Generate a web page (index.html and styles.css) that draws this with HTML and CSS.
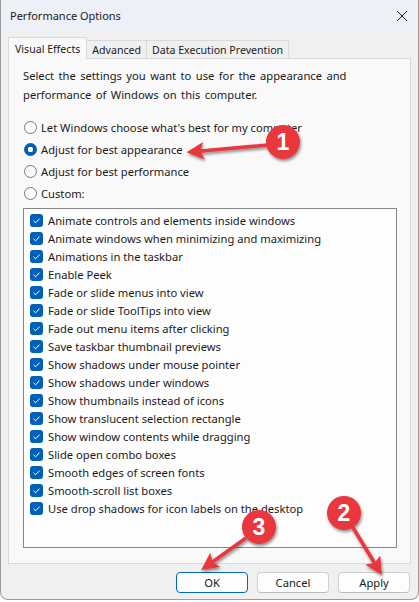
FILE: index.html
```html
<!DOCTYPE html>
<html>
<head>
<meta charset="utf-8">
<link rel="stylesheet" href="styles.css">
</head>
<body>
<div class="window">
  <div class="titlebar">
    <span class="title">Performance Options</span>
    <svg class="close" width="12" height="12" viewBox="0 0 12 12"><path d="M1 1L11 11M11 1L1 11" stroke="#1a1a1a" stroke-width="1"/></svg>
  </div>
  <div class="body">
    <div class="tabs">
      <div class="tab active">Visual Effects</div>
      <div class="tab">Advanced</div>
      <div class="tab">Data Execution Prevention</div>
    </div>
    <div class="panel">
      <p class="desc">Select the settings you want to use for the appearance and performance of Windows on this computer.</p>
      <div class="radios">
        <label class="radio"><span class="rb"></span>Let Windows choose what's best for my computer</label>
        <label class="radio"><span class="rb on"></span>Adjust for best appearance</label>
        <label class="radio"><span class="rb"></span>Adjust for best performance</label>
        <label class="radio"><span class="rb"></span>Custom:</label>
      </div>
      <div class="listbox">
        <div class="item"><span class="cb"></span>Animate controls and elements inside windows</div>
        <div class="item"><span class="cb"></span>Animate windows when minimizing and maximizing</div>
        <div class="item"><span class="cb"></span>Animations in the taskbar</div>
        <div class="item"><span class="cb"></span>Enable Peek</div>
        <div class="item"><span class="cb"></span>Fade or slide menus into view</div>
        <div class="item"><span class="cb"></span>Fade or slide ToolTips into view</div>
        <div class="item"><span class="cb"></span>Fade out menu items after clicking</div>
        <div class="item"><span class="cb"></span>Save taskbar thumbnail previews</div>
        <div class="item"><span class="cb"></span>Show shadows under mouse pointer</div>
        <div class="item"><span class="cb"></span>Show shadows under windows</div>
        <div class="item"><span class="cb"></span>Show thumbnails instead of icons</div>
        <div class="item"><span class="cb"></span>Show translucent selection rectangle</div>
        <div class="item"><span class="cb"></span>Show window contents while dragging</div>
        <div class="item"><span class="cb"></span>Slide open combo boxes</div>
        <div class="item"><span class="cb"></span>Smooth edges of screen fonts</div>
        <div class="item"><span class="cb"></span>Smooth-scroll list boxes</div>
        <div class="item"><span class="cb"></span>Use drop shadows for icon labels on the desktop</div>
      </div>
    </div>
    <div class="buttons">
      <button class="btn default">OK</button>
      <button class="btn">Cancel</button>
      <button class="btn">Apply</button>
    </div>
  </div>
  <svg class="annot" width="419" height="602" viewBox="0 0 419 602">
    <defs>
      <filter id="sh" x="-50%" y="-50%" width="200%" height="200%">
        <feDropShadow dx="1" dy="2" stdDeviation="1.5" flood-color="#000" flood-opacity="0.45"/>
      </filter>
      <marker id="ah" viewBox="0 0 10 10" refX="8" refY="5" markerWidth="5" markerHeight="5" orient="auto">
        <path d="M0 0L10 5L0 10L2 5Z" fill="#e8373d"/>
      </marker>
    </defs>
    <g filter="url(#sh)">
      <line x1="268" y1="145" x2="190" y2="152" stroke="#e8373d" stroke-width="3.5" marker-end="url(#ah)"/>
      <circle cx="283" cy="142" r="17" fill="#e8373d"/>
      <line x1="352" y1="526" x2="380" y2="572" stroke="#e8373d" stroke-width="3.5" marker-end="url(#ah)"/>
      <circle cx="344" cy="513" r="17" fill="#e8373d"/>
      <line x1="246" y1="538" x2="204" y2="568" stroke="#e8373d" stroke-width="3.5" marker-end="url(#ah)"/>
      <circle cx="259" cy="527" r="17" fill="#e8373d"/>
    </g>
    <text x="283" y="150" class="num">1</text>
    <text x="344" y="521" class="num">2</text>
    <text x="259" y="535" class="num">3</text>
  </svg>
</div>
</body>
</html>
```

FILE: styles.css
```css
* { box-sizing: border-box; }
html, body { margin: 0; padding: 0; }
body {
  width: 419px;
  height: 602px;
  background: #ffffff;
  font-family: "Noto Sans", "Segoe UI", sans-serif;
  font-size: 11.2px;
  color: #1a1a1a;
  overflow: hidden;
}
.window {
  position: relative;
  width: 419px;
  height: 600px;
  border: 1px solid #9b9b9b;
  border-top: none;
  border-radius: 0 0 8px 8px;
  background: #f0f0f0;
  display: flex;
  flex-direction: column;
}
.titlebar {
  height: 31px;
  background: #eef0f7;
  display: flex;
  align-items: center;
  justify-content: space-between;
  padding: 0 8px 0 9px;
}
.title { font-size: 11px; color: #1a1a1a; }
.close { margin-right: 2px; }
.body {
  flex: 1;
  display: flex;
  flex-direction: column;
  padding: 6px 7px 0 7px;
}
.tabs {
  display: flex;
  align-items: flex-end;
  height: 21px;
  position: relative;
  z-index: 1;
  font-size: 10.6px;
}
.tab {
  height: 18px;
  padding: 0 5px;
  border: 1px solid #d9d9d9;
  border-bottom: none;
  background: #f0f0f0;
  display: flex;
  align-items: center;
  margin-left: -1px;
}
.tab:first-child { margin-left: 0; }
.tab.active {
  height: 22px;
  margin-bottom: -1px;
  background: #f9f9f9;
  padding: 0 6px;
}
.panel {
  height: 506px;
  background: #f9f9f9;
  border: 1px solid #d9d9d9;
  padding: 7px 13px 0 14px;
  display: flex;
  flex-direction: column;
}
.desc {
  margin: 0;
  line-height: 19px;
  width: 380px;
  word-spacing: 1.5px;
}
.radios {
  margin-top: 12px;
  display: flex;
  flex-direction: column;
}
.radio {
  height: 22px;
  display: flex;
  align-items: center;
  gap: 4px;
  padding-left: 1px;
}
.rb {
  width: 13px;
  height: 13px;
  border: 1px solid #7a7a7a;
  border-radius: 50%;
  background: #fbfbfb;
  flex: none;
}
.rb.on {
  border: none;
  background: radial-gradient(circle, #ffffff 0 2.5px, #005fb8 3px);
}
.listbox {
  margin-top: 4px;
  width: 374px;
  height: 340px;
  border: 1px solid #878787;
  background: #fdfdfd;
  padding: 2px 0 0 6px;
}
.item {
  height: 18px;
  display: flex;
  align-items: center;
  gap: 5px;
}
.cb {
  width: 13px;
  height: 13px;
  border-radius: 3px;
  background: #005fb8 url("data:image/svg+xml,%3Csvg xmlns='http://www.w3.org/2000/svg' width='13' height='13'%3E%3Cpath d='M3.5 6.8L5.6 8.8L9.6 4.6' fill='none' stroke='white' stroke-width='1'/%3E%3C/svg%3E") no-repeat center;
  flex: none;
}
.buttons {
  display: flex;
  justify-content: flex-end;
  gap: 9px;
  margin-top: 8px;
  padding-right: 1px;
}
.btn {
  width: 72px;
  height: 21px;
  font-family: inherit;
  font-size: 11.2px;
  color: #1a1a1a;
  background: #fdfdfd;
  border: 1px solid #d0d0d0;
  border-bottom-color: #bdbdbd;
  border-radius: 4px;
  padding: 0;
}
.btn.default { border-color: #0067c0; }
.annot {
  position: absolute;
  left: -1px;
  top: 0;
  pointer-events: none;
}
.num {
  font-family: "Liberation Sans", Arial, sans-serif;
  font-weight: bold;
  font-size: 23px;
  fill: #ffffff;
  text-anchor: middle;
}
```
